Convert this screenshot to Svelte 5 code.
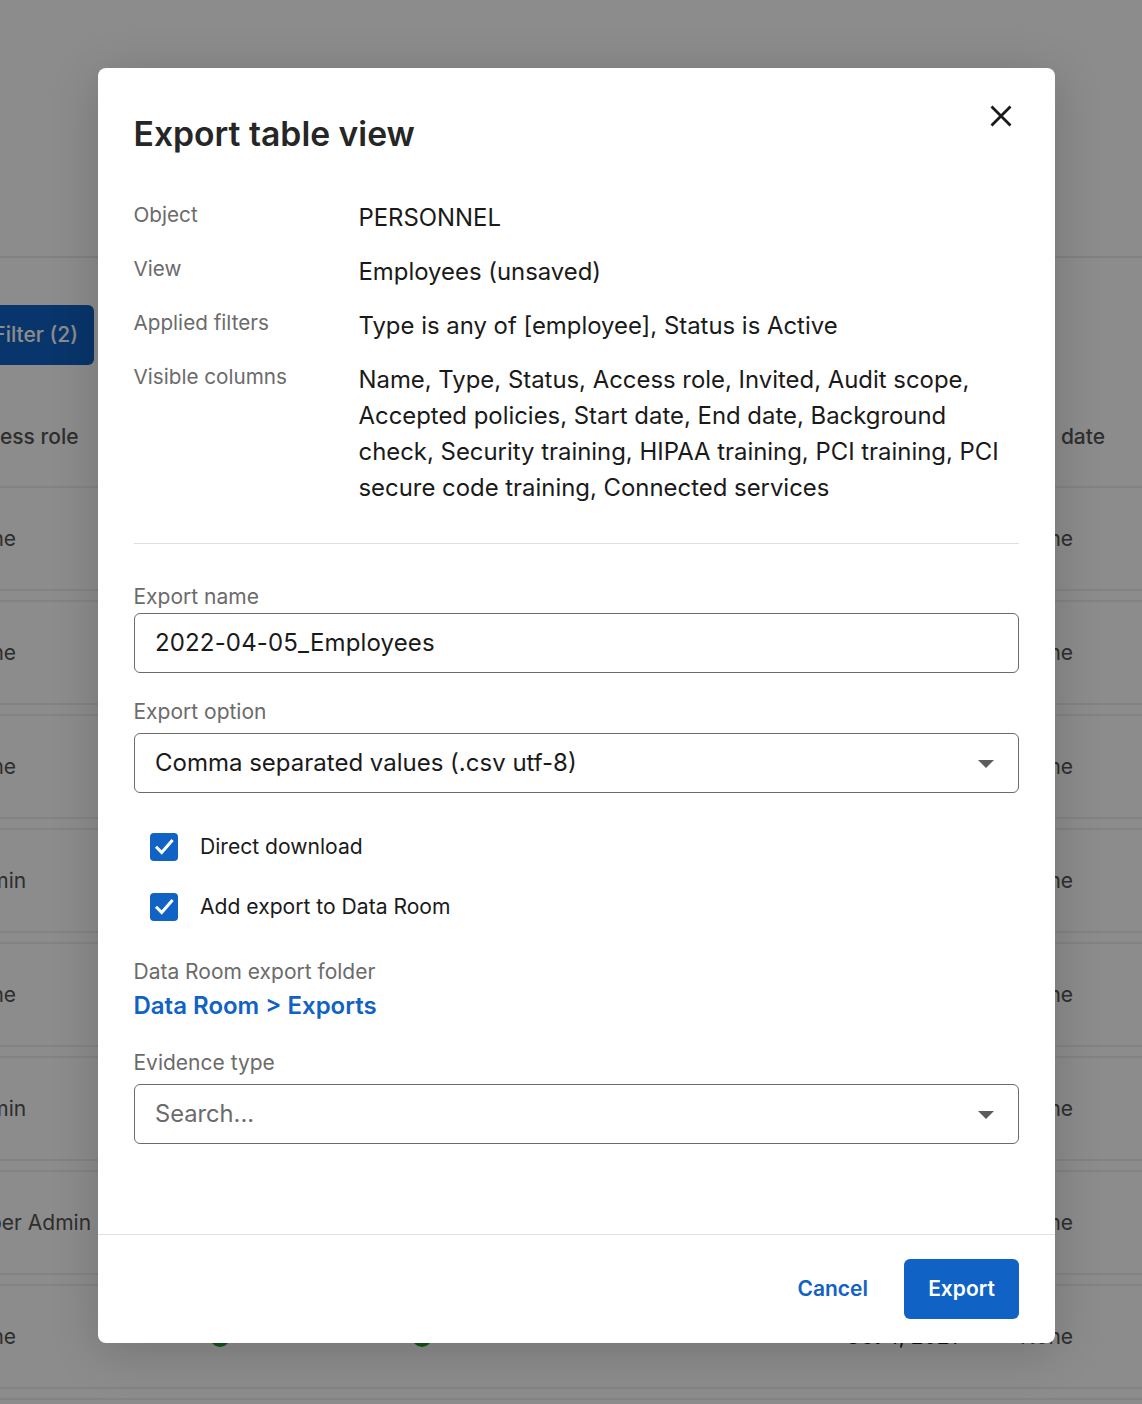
<script>
    const rows = [
        { role: "None", start: "", end: "None" },
        { role: "None", start: "", end: "None" },
        { role: "None", start: "", end: "None" },
        { role: "Admin", start: "", end: "None" },
        { role: "None", start: "", end: "None" },
        { role: "Admin", start: "", end: "None" },
        { role: "Super Admin", start: "", end: "None" },
        { role: "None", start: "Oct 4, 2021", end: "None", ok: true },
        { role: "", start: "", end: "" }
    ];

    const info = [
        { label: "Object", value: "PERSONNEL" },
        { label: "View", value: "Employees (unsaved)" },
        { label: "Applied filters", value: "Type is any of [employee], Status is Active" },
        {
            label: "Visible columns",
            value: "Name, Type, Status, Access role, Invited, Audit scope, Accepted policies, Start date, End date, Background check, Security training, HIPAA training, PCI training, PCI secure code training, Connected services"
        }
    ];

    let exportName = "2022-04-05_Employees";
</script>

<div class="page">
    <div class="table">
        <div class="toolbar">
            <button class="filterBtn" tabindex="-1">Filter (2)</button>
        </div>
        <div class="headRow">
            <span class="accessHead">Access role</span>
            <span></span>
            <span></span>
            <span></span>
            <span></span>
            <span class="endHead">End date</span>
        </div>
        {#each rows as row}
            <div class="row">
                <span class="role">{row.role}</span>
                <span>{#if row.ok}<i class="dot"></i>{/if}</span>
                <span>{#if row.ok}<i class="dot"></i>{/if}</span>
                <span></span>
                <span class="dark">{row.start}</span>
                <span>{row.end}</span>
            </div>
        {/each}
    </div>

    <div class="scrim"></div>

    <div class="modal">
        <div class="body">
            <div class="head">
                <h2>Export table view</h2>
                <svg class="close" width="24" height="24" viewBox="0 0 24 24" fill="none">
                    <path d="M2.5 2.5 21.5 21.5M21.5 2.5 2.5 21.5" stroke="#1a1a1a" stroke-width="2.8" />
                </svg>
            </div>

            <div class="info">
                {#each info as item}
                    <div class="infoLabel">{item.label}</div>
                    <div class="infoValue">{item.value}</div>
                {/each}
            </div>

            <hr />

            <div class="fieldLabel first">Export name</div>
            <input class="control nameInput" bind:value={exportName} />

            <div class="fieldLabel">Export option</div>
            <div class="control select">
                <span>Comma separated values (.csv utf-8)</span>
                <i class="caret"></i>
            </div>

            <div class="checks">
                <div class="check">
                    <span class="box">
                        <svg width="28" height="28" viewBox="0 0 28 28" fill="none">
                            <path d="M6 13.7 11.7 19.6 22.6 7" stroke="#fff" stroke-width="3" />
                        </svg>
                    </span>
                    Direct download
                </div>
                <div class="check">
                    <span class="box">
                        <svg width="28" height="28" viewBox="0 0 28 28" fill="none">
                            <path d="M6 13.7 11.7 19.6 22.6 7" stroke="#fff" stroke-width="3" />
                        </svg>
                    </span>
                    Add export to Data Room
                </div>
            </div>

            <div class="folderLabel">Data Room export folder</div>
            <div class="folderLink">Data Room &gt; Exports</div>

            <div class="fieldLabel evidence">Evidence type</div>
            <div class="control select">
                <span class="placeholder">Search...</span>
                <i class="caret"></i>
            </div>
        </div>

        <div class="footer">
            <span class="cancel">Cancel</span>
            <button class="export" tabindex="-1">Export</button>
        </div>
    </div>
</div>

<style>
    :global(body) {
        margin: 0;
        background: #fff;
    }
    .page {
        position: relative;
        width: 1142px;
        height: 1404px;
        overflow: hidden;
        font-family: Inter, "Liberation Sans", sans-serif;
        color: #1a1a1a;
    }
    .table {
        padding-top: 256px;
    }
    .toolbar {
        box-sizing: border-box;
        height: 166px;
        padding-top: 47px;
        border-top: 2px solid #ececec;
    }
    .filterBtn {
        display: block;
        width: 120px;
        height: 60px;
        margin-left: -26px;
        padding: 0 16px 2px 0;
        border: 0;
        border-radius: 6px;
        background: #1062c4;
        color: #fff;
        font: 500 21px Inter, sans-serif;
        text-align: right;
    }
    .headRow, .row {
        display: grid;
        grid-template-columns: 247px 202px 258px 175px 175px 1fr;
        margin-left: -37px;
        font-size: 21px;
        align-items: center;
        color: #555;
    }
    .headRow {
        box-sizing: border-box;
        height: 64px;
        align-items: start;
        padding-top: 1px;
        font-weight: 500;
        line-height: 28px;
    }
    .accessHead {
        margin-left: -2px;
    }
    .endHead {
        margin-left: -3px;
    }
    .row {
        height: 101px;
        margin-bottom: 9px;
        border-top: 2px solid #eeeeee;
        border-bottom: 2px solid #eeeeee;
    }
    .dark {
        color: #1a1a1a;
    }
    .dot {
        display: block;
        width: 20px;
        height: 20px;
        border-radius: 50%;
        background: #1f9d2b;
    }
    .scrim {
        position: absolute;
        inset: 0;
        background: rgba(0, 0, 0, 0.45);
    }
    .modal {
        position: absolute;
        left: 98px;
        top: 68px;
        width: 957px;
        height: 1275px;
        display: flex;
        flex-direction: column;
        background: #fff;
        border-radius: 8px;
        box-shadow: 0 8px 48px rgba(0, 0, 0, 0.18);
    }
    .body {
        flex: 1;
        padding: 46px 36px 0;
    }
    .head {
        display: flex;
        justify-content: space-between;
        height: 40px;
    }
    h2 {
        margin: 0 0 0 -0.5px;
        font-size: 33.7px;
        line-height: 40px;
        font-weight: 600;
        color: #262626;
    }
    .close {
        margin-top: -10px;
        margin-right: 6px;
    }
    .info {
        display: grid;
        grid-template-columns: 225px 1fr;
        row-gap: 18px;
        margin: 46px 0 0 -0.5px;
    }
    .infoLabel {
        font-size: 20.7px;
        line-height: 29px;
        color: #6b6b6b;
    }
    .infoValue {
        font-size: 23.9px;
        line-height: 36px;
        color: #1a1a1a;
    }
    hr {
        margin: 37px 0 0;
        border: 0;
        border-top: 1px solid #e0e0e0;
    }
    .fieldLabel {
        font-size: 21px;
        line-height: 28px;
        color: #6b6b6b;
        margin: 25px 0 7px -0.5px;
    }
    .fieldLabel.first {
        margin-top: 39px;
        margin-bottom: 2px;
    }
    .control {
        display: block;
        width: 100%;
        height: 60px;
        box-sizing: border-box;
        padding: 0 20px 2px;
        border: 1px solid #6b6b6b;
        border-radius: 6px;
        font: 400 24px Inter, sans-serif;
        color: #1a1a1a;
        background: #fff;
        outline: none;
    }
    .nameInput {
        letter-spacing: 0.15px;
    }
    .select {
        display: flex;
        align-items: center;
        justify-content: space-between;
    }
    .placeholder {
        color: #6b6b6b;
        font-size: 23.7px;
    }
    .caret {
        width: 0;
        height: 0;
        margin: 3px 4px 0 0;
        border-left: 8px solid transparent;
        border-right: 8px solid transparent;
        border-top: 8px solid #5c5c5c;
    }
    .checks {
        padding: 24px 16px 0;
    }
    .check {
        display: flex;
        align-items: center;
        gap: 22px;
        height: 60px;
        padding-bottom: 1px;
        box-sizing: border-box;
        font-size: 21.1px;
        color: #1a1a1a;
    }
    .box {
        display: flex;
        width: 28px;
        height: 28px;
        margin-top: 1px;
        border-radius: 4px;
        background: #1062c4;
    }
    .folderLabel {
        margin: 21px 0 0 -0.5px;
        font-size: 21px;
        line-height: 28px;
        color: #6b6b6b;
    }
    .folderLink {
        margin: 2px 0 0 -0.5px;
        font-size: 24px;
        line-height: 36px;
        font-weight: 560;
        color: #1062c4;
    }
    .fieldLabel.evidence {
        margin-top: 25px;
    }
    .footer {
        display: flex;
        justify-content: flex-end;
        align-items: center;
        gap: 36px;
        height: 108px;
        padding: 0 36px;
        border-top: 1px solid #e0e0e0;
    }
    .cancel {
        font-size: 21px;
        font-weight: 560;
        color: #1062c4;
        padding-bottom: 2px;
    }
    .export {
        width: 115px;
        height: 60px;
        padding: 0 0 2px;
        border: 0;
        border-radius: 6px;
        background: #1062c4;
        color: #fff;
        font: 560 21px Inter, sans-serif;
    }
</style>
